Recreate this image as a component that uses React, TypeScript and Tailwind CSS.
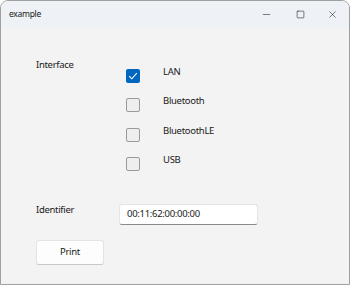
import { Minus, Square, X } from 'lucide-react'

const options = [
  { name: 'LAN', checked: true },
  { name: 'Bluetooth', checked: false },
  { name: 'BluetoothLE', checked: false },
  { name: 'USB', checked: false },
]

function Checkbox({ checked }: { checked: boolean }) {
  if (checked) {
    return (
      <div className="flex h-[14px] w-[14px] shrink-0 items-center justify-center rounded-[2px] bg-[#0067c0]">
        <svg width="10" height="10" viewBox="0 0 10 10" fill="none" aria-hidden>
          <path d="M1.2 5.2 L3.8 7.8 L8.8 2.2" stroke="white" strokeWidth="1.1" />
        </svg>
      </div>
    )
  }
  return <div className="h-[14px] w-[14px] shrink-0 rounded-[2px] border border-[#9a9a9a] bg-[#eeeeee]" />
}

export default function App() {
  return (
    <div
      className="flex h-[285px] w-[350px] flex-col overflow-hidden rounded-t-[8px] border border-[#a0a0a0] bg-[#f3f3f3] text-[9.5px] tracking-[-0.3px] text-[#1a1a1a]"
      style={{ fontFamily: '"Noto Sans", sans-serif' }}
    >
      <div className="flex h-[26px] shrink-0 items-center bg-[#eef2f6] pl-[8px]">
        <span className="flex-1 text-[8.5px] leading-[14px]">example</span>
        <div className="flex items-center">
          <div className="flex w-[30px] justify-center">
            <Minus size={11} strokeWidth={1.2} aria-hidden />
          </div>
          <div className="flex w-[34px] justify-center pl-[4px]">
            <Square size={9} strokeWidth={1.5} aria-hidden />
          </div>
          <div className="flex w-[34px] justify-center">
            <X size={11} strokeWidth={1.2} aria-hidden />
          </div>
        </div>
      </div>

      <div className="flex flex-col pl-[35px]">
        <div className="mt-[31px] flex items-start">
          <span className="w-[90px] leading-[14px]">Interface</span>
          <div className="mt-[11px] flex flex-col gap-[15.3px]">
            {options.map((o) => (
              <div key={o.name} className="flex items-start">
                <Checkbox checked={o.checked} />
                <span className="ml-[23px] mt-[-4px] leading-[14px]">{o.name}</span>
              </div>
            ))}
          </div>
        </div>

        <div className="mt-[33px] flex items-center">
          <span className="mt-[-8px] w-[83px] leading-[14px]">Identifier</span>
          <div className="flex h-[21px] w-[139px] items-center rounded-[3px] border border-[#e5e5e5] border-b-[#8a8a8a] bg-white px-[7px] leading-[14px]">
            00:11:62:00:00:00
          </div>
        </div>

        <button className="mt-[15px] flex h-[25px] w-[68px] items-center justify-center rounded-[3px] border border-[#e3e3e3] border-b-[#c8c8c8] bg-[#fdfdfd] leading-[14px]">
          Print
        </button>
      </div>
    </div>
  )
}
